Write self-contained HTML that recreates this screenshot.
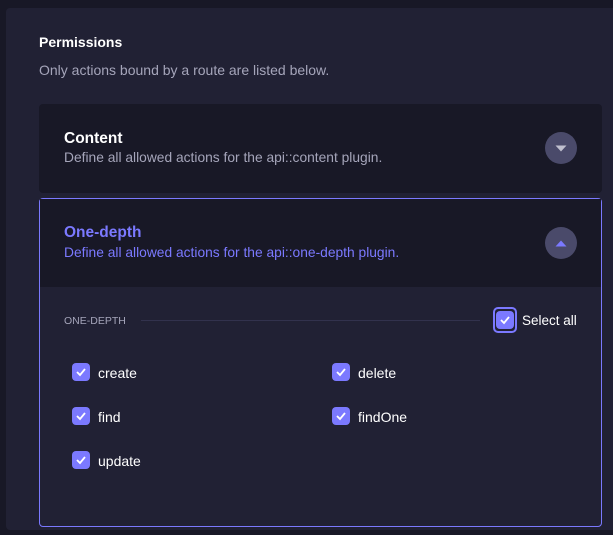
<!DOCTYPE html>
<html><head><style>
*{box-sizing:border-box;margin:0;padding:0}
body{width:613px;height:535px;background:#181826;font-family:"Liberation Sans",sans-serif;position:relative;overflow:hidden}
.panel{position:absolute;left:6px;top:8px;width:620px;height:522px;background:#212134;border-radius:4px}
.a{position:absolute;white-space:nowrap}
.card{position:absolute;left:39px;width:563px;border-radius:4px}
.circ{position:absolute;width:32px;height:32px;border-radius:50%;background:#4a4a6a}
.cb{position:absolute;width:18px;height:18px;border-radius:4px;background:#7b79ff}
.cb svg{position:absolute;left:3px;top:3px}
.lbl{position:absolute;color:#fff;font-size:14px}
</style></head><body>
<div class="panel"></div>
<div class="a" style="left:39px;top:34px;color:#fff;font-weight:bold;font-size:14px">Permissions</div>
<div class="a" style="left:39px;top:62px;color:#a5a5ba;font-size:14px">Only actions bound by a route are listed below.</div>
<div class="card" style="top:104px;height:89px;background:#181826"></div>
<div class="a" style="left:64px;top:130px;color:#fff;font-weight:bold;font-size:15.5px">Content</div>
<div class="a" style="left:64px;top:150px;color:#a5a5ba;font-size:13.8px">Define all allowed actions for the api::content plugin.</div>
<div class="circ" style="left:545px;top:132px"><svg width="32" height="32"><path d="M10.5 13.5h11l-5.5 6z" fill="#c0c0cf"/></svg></div>
<div class="card" style="top:198px;height:329px;border:1px solid #7b79ff;background:#212134"></div>
<div class="a" style="left:40px;top:199px;width:561px;height:88px;background:#181826"></div>
<div class="a" style="left:64px;top:224px;color:#7b79ff;font-weight:bold;font-size:15.5px">One-depth</div>
<div class="a" style="left:64px;top:245px;color:#7b79ff;font-size:13.8px">Define all allowed actions for the api::one-depth plugin.</div>
<div class="circ" style="left:545px;top:227px"><svg width="32" height="32"><path d="M10.5 19.5h11l-5.5-6z" fill="#7b79ff"/></svg></div>
<div class="a" style="left:64px;top:315px;color:#a5a5ba;font-size:10.5px">ONE-DEPTH</div>
<div class="a" style="left:141px;top:320px;width:339px;height:1px;background:#32324d"></div>
<div class="a" style="left:493px;top:307px;width:24px;height:26px;border:2px solid #7b79ff;border-radius:5px"></div>
<div class="cb" style="left:496px;top:311px"><svg width="12" height="12"><path d="M2 6l3 3 5-6" stroke="#fff" stroke-width="1.8" fill="none"/></svg></div>
<div class="lbl" style="left:522px;top:313px;font-size:13.5px">Select all</div>
<div class="cb" style="left:72px;top:363px"><svg width="12" height="12"><path d="M2 6l3 3 5-6" stroke="#fff" stroke-width="1.8" fill="none"/></svg></div>
<div class="lbl" style="left:98px;top:365px">create</div>
<div class="cb" style="left:332px;top:363px"><svg width="12" height="12"><path d="M2 6l3 3 5-6" stroke="#fff" stroke-width="1.8" fill="none"/></svg></div>
<div class="lbl" style="left:358px;top:365px">delete</div>
<div class="cb" style="left:72px;top:407px"><svg width="12" height="12"><path d="M2 6l3 3 5-6" stroke="#fff" stroke-width="1.8" fill="none"/></svg></div>
<div class="lbl" style="left:98px;top:409px">find</div>
<div class="cb" style="left:332px;top:407px"><svg width="12" height="12"><path d="M2 6l3 3 5-6" stroke="#fff" stroke-width="1.8" fill="none"/></svg></div>
<div class="lbl" style="left:358px;top:409px">findOne</div>
<div class="cb" style="left:72px;top:451px"><svg width="12" height="12"><path d="M2 6l3 3 5-6" stroke="#fff" stroke-width="1.8" fill="none"/></svg></div>
<div class="lbl" style="left:98px;top:453px">update</div>
</body></html>
